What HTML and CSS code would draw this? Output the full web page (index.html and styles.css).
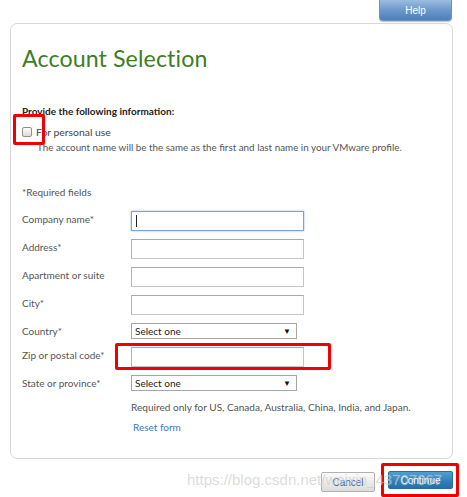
FILE: index.html
```html
<!DOCTYPE html>
<html>
<head>
<meta charset="utf-8">
<link rel="stylesheet" href="styles.css">
</head>
<body>
<div class="page">
  <div class="topbar">
    <button class="help-btn">Help</button>
  </div>
  <div class="panel">
    <h1 class="title">Account Selection</h1>
    <div class="intro">Provide the following information:</div>
    <div class="personal">
      <span class="checkbox"></span>
      <span class="personal-label">For personal use</span>
    </div>
    <div class="personal-note">The account name will be the same as the first and last name in your VMware profile.</div>
    <div class="required">*Required fields</div>
    <div class="form">
      <div class="row"><span class="label">Company name*</span><span class="input focused"><span class="caret"></span></span></div>
      <div class="row"><span class="label">Address*</span><span class="input"></span></div>
      <div class="row"><span class="label">Apartment or suite</span><span class="input"></span></div>
      <div class="row"><span class="label">City*</span><span class="input"></span></div>
      <div class="row"><span class="label">Country*</span><span class="select"><span>Select one</span><span class="arrow">&#9660;</span></span></div>
      <div class="row"><span class="label">Zip or postal code*</span><span class="input"></span></div>
      <div class="row"><span class="label">State or province*</span><span class="select"><span>Select one</span><span class="arrow">&#9660;</span></span></div>
      <div class="row note-row"><span class="label"></span><span class="note">Required only for US, Canada, Australia, China, India, and Japan.</span></div>
      <div class="row link-row"><span class="label"></span><a class="reset">Reset form</a></div>
    </div>
  </div>
  <div class="actions">
    <button class="btn cancel">Cancel</button>
    <button class="btn continue">Continue</button>
  </div>
  <div class="mark mark-check"></div>
  <div class="mark mark-zip"></div>
  <div class="mark mark-continue"></div>
  <div class="watermark">https://blog.csdn.net/weixin_43707067</div>
</div>
</body>
</html>
```
FILE: styles.css
```css
* { box-sizing: border-box; }
html, body { margin: 0; padding: 0; background: #fff; }
body { font-family: "Lato", "Open Sans", sans-serif; color: #444; }
.page { position: relative; width: 467px; height: 497px; overflow: hidden; }

.topbar { height: 23px; display: flex; justify-content: flex-end; padding-right: 15px; }
.help-btn {
  width: 73px; height: 21px; margin: 0; padding: 0;
  border: 1px solid #6b93c0; border-top: none; border-radius: 0 0 4px 4px;
  background: linear-gradient(#9cbde0, #6c98cb 50%, #4f7fb8);
  color: #fff; font-family: "Liberation Sans", Arial, sans-serif; font-size: 10px;
  box-shadow: 0 1px 1px rgba(0,0,0,0.25);
}

.panel {
  margin-left: 10px; width: 443px; height: 436px;
  border: 1px solid #d8d8d8; border-radius: 7px;
  padding: 0 0 0 11px;
}
.title {
  margin: 19px 0 0 0; font-weight: 400; font-size: 23.2px; line-height: 30px;
  color: #3d7d28; letter-spacing: 0.1px;
}
.intro { margin-top: 31px; font-size: 10px; font-weight: 700; color: #222; line-height: 14px; }
.personal { display: flex; align-items: center; margin-top: 7px; height: 14px; }
.checkbox {
  width: 10px; height: 10px; border: 1px solid #8f8f8f; border-radius: 2px;
  background: linear-gradient(#fdfdfd, #dcdcdc); margin-right: 4px;
}
.personal-label { font-size: 10.4px; color: #444; }
.personal-note { margin-left: 15px; margin-top: 1px; font-size: 9.85px; color: #555; line-height: 14px; }
.required { margin-top: 31px; font-size: 10px; color: #555; line-height: 14px; }

.form { margin-top: 12px; display: flex; flex-direction: column; gap: 8px; }
.row { display: flex; align-items: flex-start; }
.label { width: 109px; flex: none; font-size: 10px; line-height: 16px; color: #555; }
.input {
  width: 173px; height: 20px; border: 1px solid #c6c6c6; border-top-color: #a9a9a9; border-left-color: #b3b3b3;
  background: #fff; position: relative;
}
.input.focused { border: 1px solid #7ba1d6; box-shadow: 0 0 2px rgba(90,140,210,0.6); }
.caret { position: absolute; left: 4px; top: 3px; width: 1px; height: 12px; background: #222; }
.select {
  width: 166px; height: 16px; border: 1px solid #a6a6a6; display: flex; justify-content: space-between;
  align-items: center; padding: 0 5px 0 3px; font-size: 10px; color: #222; background: #fff;
}
.arrow { font-size: 8px; color: #111; }
.note-row { margin-top: 0; }
.note { font-size: 10.07px; color: #555; line-height: 16px; }
.link-row { margin-top: -4px; }
.reset { margin-left: 2px; font-size: 10px; color: #3b78b4; line-height: 16px; }

.actions { display: flex; justify-content: flex-end; align-items: flex-start; gap: 13px; padding-right: 14px; margin-top: 12px; }
.btn { margin: 0; padding: 0; font-family: "Liberation Sans", Arial, sans-serif; font-size: 10px; }
.cancel {
  width: 54px; height: 20px; margin-top: 1px; border: 1px solid #b0b0b0; border-radius: 2px;
  background: linear-gradient(#fbfbfb, #dcdcdc); color: #2e5f9a;
}
.continue {
  width: 65px; height: 18px; border: 1px solid #2b6d9e; border-radius: 2px;
  background: linear-gradient(#4ea0d3, #2f7fb9 60%, #2570a8); color: #fff;
}

.mark { position: absolute; border: 3px solid #f00000; border-radius: 2px; }
.mark-check { left: 13px; top: 114px; width: 32px; height: 31px; }
.mark-zip { left: 115px; top: 343px; width: 216px; height: 27px; }
.mark-continue { left: 381px; top: 463px; width: 78px; height: 34px; }

.watermark {
  position: absolute; left: 187px; top: 471px;
  font-family: "Liberation Sans", Arial, sans-serif; font-size: 15px; line-height: 18px;
  color: rgba(190,190,190,0.55); white-space: nowrap;
  text-shadow: 0 0 1px rgba(255,255,255,0.4);
}
```
